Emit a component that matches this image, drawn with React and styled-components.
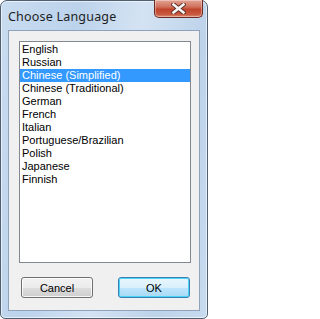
import React, { useState } from "react";
import styled, { createGlobalStyle } from "styled-components";

const GlobalStyle = createGlobalStyle`
  html, body {
    margin: 0;
    padding: 0;
    background: #ffffff;
  }
`;

const languages = [
  "English",
  "Russian",
  "Chinese (Simplified)",
  "Chinese (Traditional)",
  "German",
  "French",
  "Italian",
  "Portuguese/Brazilian",
  "Polish",
  "Japanese",
  "Finnish",
];

const Window = styled.div`
  box-sizing: border-box;
  width: 208px;
  height: 319px;
  display: flex;
  flex-direction: column;
  border: 1px solid #4f5f70;
  border-radius: 7px 7px 5px 5px;
  background: linear-gradient(
    100deg,
    #c9dcf0 0%,
    #bcd3ec 30%,
    #d4e3f3 55%,
    #bdd3ea 80%,
    #c8dbef 100%
  );
  box-shadow: inset 0 0 0 1px rgba(255, 255, 255, 0.6);
  padding: 0 7px 7px 7px;
`;

const TitleBar = styled.div`
  height: 29px;
  display: flex;
  align-items: flex-start;
  justify-content: space-between;
`;

const Title = styled.span`
  margin-top: 7px;
  font-family: "Noto Sans", "Open Sans", sans-serif;
  font-size: 12.5px;
  color: #1e1e1e;
  letter-spacing: 0.2px;
`;

const CloseButton = styled.div`
  box-sizing: border-box;
  width: 49px;
  height: 18px;
  margin-top: -1px;
  margin-right: -3px;
  display: flex;
  align-items: center;
  justify-content: center;
  border: 1px solid #6b2a24;
  border-top: none;
  border-radius: 0 0 5px 5px;
  background: linear-gradient(
    180deg,
    #e3a393 0%,
    #d0715c 40%,
    #c0442c 55%,
    #c85a40 85%,
    #de8f76 100%
  );
  box-shadow: inset 0 0 0 1px rgba(255, 255, 255, 0.35);
`;

const Client = styled.div`
  flex: 1;
  display: flex;
  flex-direction: column;
  border: 1px solid #8ea2bb;
  background: #f0f0f0;
  padding: 10px 8px 12px 10px;
`;

const ListBox = styled.ul`
  box-sizing: border-box;
  height: 222px;
  margin: 0;
  padding: 1px 0;
  list-style: none;
  background: #ffffff;
  border: 1px solid #828790;
`;

const Item = styled.li`
  height: 13px;
  line-height: 13px;
  padding-left: 2px;
  font-family: "Liberation Sans", Arial, sans-serif;
  font-size: 11px;
  white-space: nowrap;
  color: ${(p) => (p.$selected ? "#ffffff" : "#000000")};
  background: ${(p) => (p.$selected ? "#3399ff" : "transparent")};
  cursor: default;
`;

const ButtonRow = styled.div`
  margin-top: 14px;
  padding: 0 1px 0 2px;
  display: flex;
  justify-content: space-between;
`;

const Button = styled.button`
  box-sizing: border-box;
  width: 72px;
  height: 21px;
  padding: 0;
  border-radius: 3px;
  font-family: "Liberation Sans", Arial, sans-serif;
  font-size: 11px;
  font-weight: normal;
  color: #000000;
  border: 1px solid ${(p) => (p.$primary ? "#3c7fb1" : "#707070")};
  background: ${(p) =>
    p.$primary
      ? "linear-gradient(180deg, #eaf6fd 0%, #d9f0fc 50%, #bee6fd 51%, #a7d9f5 100%)"
      : "linear-gradient(180deg, #f2f2f2 0%, #ebebeb 50%, #dddddd 51%, #cfcfcf 100%)"};
  box-shadow: inset 0 0 0 1px
    ${(p) => (p.$primary ? "#48d3fb" : "rgba(255, 255, 255, 0.8)")};
  cursor: default;
`;

function CloseGlyph() {
  return (
    <svg width="15" height="11" viewBox="0 0 15 11">
      <path
        d="M2.5 1.5 L12.5 9.5 M12.5 1.5 L2.5 9.5"
        stroke="#5a2a22"
        strokeWidth="4.4"
        strokeLinecap="square"
      />
      <path
        d="M2.5 1.5 L12.5 9.5 M12.5 1.5 L2.5 9.5"
        stroke="#f4f4f4"
        strokeWidth="2.6"
        strokeLinecap="square"
      />
    </svg>
  );
}

export default function App() {
  const [selected, setSelected] = useState(2);

  return (
    <>
      <GlobalStyle />
      <Window>
        <TitleBar>
          <Title>Choose Language</Title>
          <CloseButton>
            <CloseGlyph />
          </CloseButton>
        </TitleBar>
        <Client>
          <ListBox>
            {languages.map((lang, i) => (
              <Item
                key={lang}
                $selected={i === selected}
                onClick={() => setSelected(i)}
              >
                {lang}
              </Item>
            ))}
          </ListBox>
          <ButtonRow>
            <Button>Cancel</Button>
            <Button $primary>OK</Button>
          </ButtonRow>
        </Client>
      </Window>
    </>
  );
}
